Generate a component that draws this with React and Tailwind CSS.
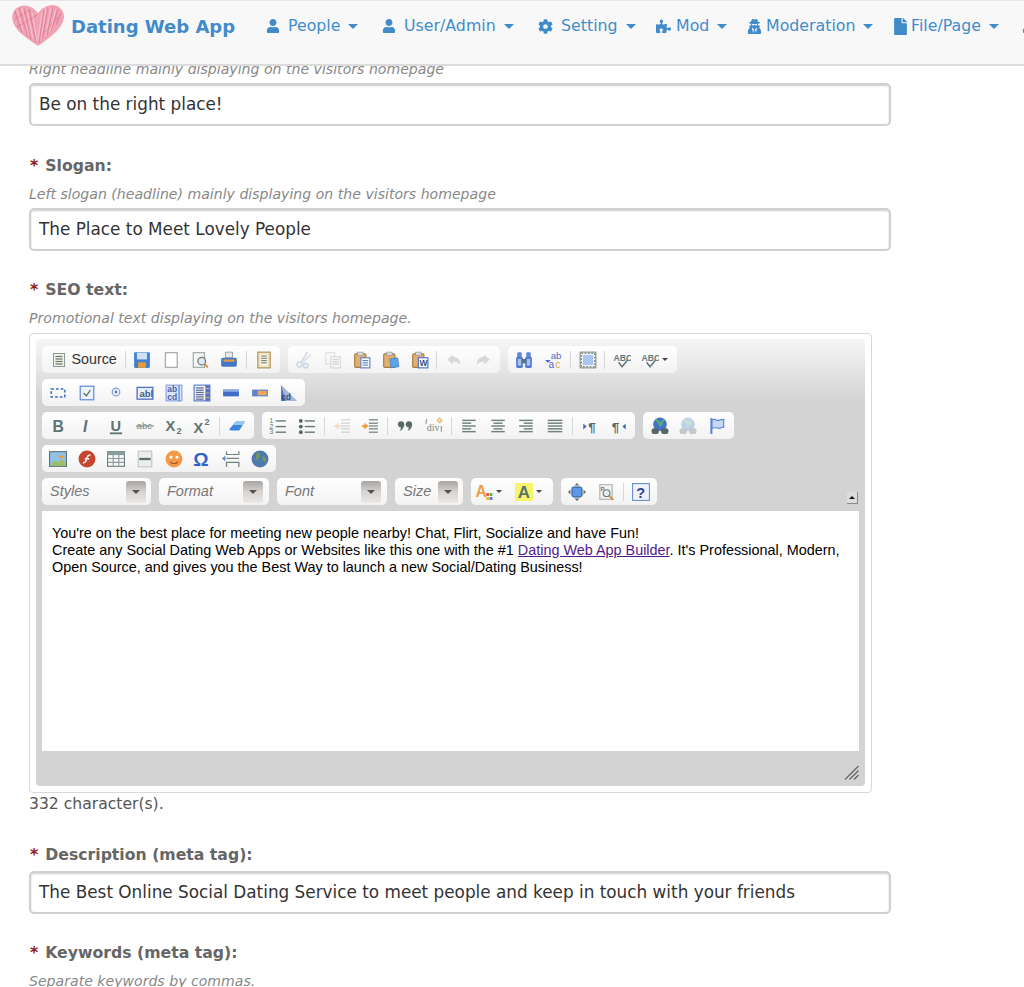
import React from "react";
import { FaUser, FaCog, FaPuzzlePiece, FaUserSecret, FaFile } from "react-icons/fa";

const S = ({ children, size = 18 }) => (
  <svg width={size} height={size} viewBox="0 0 16 16" className="block shrink-0">{children}</svg>
);
const lines = (x1, x2, ys, c = "#6f7f7c", w = 1.2) =>
  ys.map((y, i) => <line key={i} x1={Array.isArray(x1) ? x1[i] : x1} x2={Array.isArray(x2) ? x2[i] : x2} y1={y} y2={y} stroke={c} strokeWidth={w} />);
const T = ({ x, y, s, c = "#5f7471", fs = 12, w = 700, it, font = "Liberation Sans" }) => (
  <text x={x} y={y} fontFamily={font} fontSize={fs} fontWeight={w} fontStyle={it ? "italic" : "normal"} fill={c}>{s}</text>
);
const Clip = ({ inner }) => (
  <>
    <rect x="1.5" y="2.5" width="10" height="12" rx="1" fill="#e0b070" stroke="#a87a40" />
    <rect x="4" y="1" width="5" height="3" fill="#d8d8d8" stroke="#999" strokeWidth=".6" />
    {inner}
  </>
);

const icons = {
  source: <S size={16}><rect x="2.5" y="1.5" width="11" height="13" fill="#f4f2e6" stroke="#8a9a94" />{lines(4.5, 11.5, [4.5, 7, 9.5, 12], "#66766f")}</S>,
  save: <S><rect x="1" y="1" width="14" height="14" rx="1" fill="#3f7fd0" /><rect x="3.5" y="1.5" width="9" height="6" fill="#cfe0f5" /><rect x="4.5" y="10" width="7" height="5" fill="#e69a3c" /></S>,
  newpage: <S><rect x="3" y="1.5" width="10.5" height="13" fill="#fff" stroke="#9aa5a2" /></S>,
  preview: <S><rect x="2" y="1.5" width="10" height="13" fill="#f7f7f7" stroke="#9aa5a2" /><circle cx="9.5" cy="9" r="3.4" fill="#dfe9ee" stroke="#68777a" strokeWidth="1.1" /><line x1="12" y1="11.5" x2="15" y2="14.5" stroke="#d98a3a" strokeWidth="1.6" /></S>,
  print: <S><rect x="5" y="1" width="6" height="5" fill="#e9e9e9" stroke="#8a8f98" strokeWidth=".7" /><rect x="1" y="6" width="14" height="8" rx="1.5" fill="#3f78c8" /><rect x="3" y="7.5" width="10" height="2" fill="#e89a45" /></S>,
  templates: <S><rect x="2.5" y="1" width="11" height="14" fill="#f3e2b8" stroke="#a98e5c" /><rect x="5" y="3" width="6" height="10" fill="#fbf7ea" />{lines(5.5, 10.5, [4.5, 6.5, 8.5, 10.5], "#78827e", 1)}</S>,
  cut: <S><line x1="11" y1="1" x2="5" y2="11" stroke="#8a9ab0" strokeWidth="1.7" /><line x1="14" y1="3" x2="7" y2="10" stroke="#9aa8bc" strokeWidth="1.4" /><circle cx="4" cy="12" r="2.2" fill="none" stroke="#6f8fd0" strokeWidth="1.4" /><circle cx="9.5" cy="13" r="2" fill="none" stroke="#6f8fd0" strokeWidth="1.4" /></S>,
  copy: <S><rect x="1.5" y="1.5" width="8" height="10" fill="#f5f3e5" stroke="#9aa" /><rect x="6" y="5" width="8.5" height="10" fill="#fbf8ea" stroke="#8a9a94" />{lines(7.5, 13, [7.5, 9.5, 11.5], "#889")}</S>,
  paste: <S><Clip inner={<><rect x="7" y="6" width="8" height="9" fill="#fff" stroke="#5c80c8" />{lines(8.5, 13.5, [8.5, 10.5, 12.5], "#5c80c8", 1)}</>} /></S>,
  pastetext: <S><Clip inner={<path d="M7 7l7-1 1 8-7 1z" fill="#5aa5e5" stroke="#3a78c0" strokeWidth=".6" />} /></S>,
  pasteword: <S><Clip inner={<><rect x="6.5" y="6" width="8.5" height="9" fill="#fff" stroke="#4a70c8" /><T x={7.6} y={13.5} s="W" c="#33507f" fs={7.5} /></>} /></S>,
  undo: <S><path d="M7 3L2 7.5 7 12V9.3c3 0 4.8.6 6.5 3 0-4.5-2.5-7-6.5-7.2z" fill="#7d9490" /></S>,
  redo: <S><path d="M9 3l5 4.5L9 12V9.3c-3 0-4.8.6-6.5 3 0-4.5 2.5-7 6.500-7.2z" fill="#7d9490" /></S>,
  find: <S><rect x="2" y="1" width="4" height="5" rx="1" fill="#5f88d8" /><rect x="10" y="1" width="4" height="5" rx="1" fill="#5f88d8" /><rect x="1" y="5" width="6" height="10" rx="1.5" fill="#4f78d0" /><rect x="9" y="5" width="6" height="10" rx="1.5" fill="#4f78d0" /><rect x="2.500" y="7" width="3" height="6" fill="#a8c2ee" /><rect x="10.500" y="7" width="3" height="6" fill="#a8c2ee" /><rect x="6" y="7" width="4" height="4" fill="#5b7280" /></S>,
  replace: <S><T x={6} y={7} s="ab" c="#4a68cc" fs={8.5} w={400} /><T x={4} y={15} s="a" c="#4a68cc" fs={9} w={400} /><T x={10} y={15} s="c" c="#e8a04a" fs={9} w={400} /><path d="M1 8l2.5 2.5L6 8z" fill="#4a68cc" /></S>,
  selectall: <S><rect x="1" y="1" width="14" height="14" fill="#f4f4f0" stroke="#83918e" /><rect x="3.5" y="3.5" width="9" height="9" fill="#a8c6f0" /><rect x="2" y="2" width="12" height="12" fill="none" stroke="#5d6c6b" strokeDasharray="1.5 1.5" /></S>,
  spell: <S><T x={0.5} y={8.5} s="ABC" c="#64787a" fs={7.6} /><path d="M5 10l3 4 5-6" fill="none" stroke="#64787a" strokeWidth="1.4" /></S>,
  dashed: <S><rect x="2" y="4.5" width="12" height="7" fill="none" stroke="#3f6cc0" strokeWidth="1.4" strokeDasharray="2.4 1.8" /></S>,
  check: <S><rect x="2" y="2" width="12" height="12" fill="#eef3fb" stroke="#6f93d6" strokeWidth="1.2" /><path d="M5 8l2.4 2.5L11 5.5" fill="none" stroke="#5f7c78" strokeWidth="1.3" /></S>,
  radio: <S size={16}><circle cx="8" cy="7" r="3.8" fill="#f2f5fb" stroke="#7f9ad6" strokeWidth="1.2" /><circle cx="8" cy="7" r="1.4" fill="#5c78b8" /></S>,
  textfield: <S><rect x="1" y="3" width="14" height="10.5" fill="#e8eefb" stroke="#5475c5" strokeWidth="1.2" /><T x={3} y={11.5} s="abl" c="#3f5d92" fs={8.5} /></S>,
  textarea: <S><rect x="1" y="1" width="14" height="14" fill="#dce6fa" stroke="#86a3df" /><T x={2} y={7.4} s="ab" c="#4464a8" fs={7.5} /><T x={2} y={14} s="cd" c="#4464a8" fs={7.5} /><line x1="12.5" y1="1" x2="12.5" y2="15" stroke="#5475c5" /></S>,
  select: <S><rect x="1" y="1" width="14" height="14" fill="#f3f6fc" stroke="#5475c5" />{lines(2.5, 9.5, [3.5, 5.5, 7.5, 9.5, 11.5, 13.5], "#5b6c94", 1.1)}<rect x="11" y="1" width="4" height="14" fill="#5475c5" /><path d="M11.5 4h3M11.5 8h3M11.5 12h3" stroke="#e6b060" /></S>,
  btn: <S><rect x="1" y="5" width="14" height="6" fill="#3e6cc8" /><rect x="1" y="5" width="14" height="2" fill="#8aa8e2" /></S>,
  imgbtn: <S><rect x="1" y="5" width="14" height="6" fill="#5b82cf" /><rect x="6" y="6" width="8" height="4" fill="#eba75a" /></S>,
  hidden: <S><path d="M1 1l14 14H1z" fill="#496fc0" /><path d="M1 1l14 14H5z" fill="#cfd5df" opacity=".7" /><T x={1} y={14} s="cd" c="#38527f" fs={7.5} /></S>,
  bold: <S><T x={3} y={13} s="B" fs={14} /></S>,
  italic: <S><T x={4.5} y={13} s="I" fs={14} it /></S>,
  underline: <S><T x={3.2} y={12} s="U" fs={13} /><line x1="2.5" y1="14.5" x2="13.5" y2="14.5" stroke="#5f7471" strokeWidth="1.6" /></S>,
  strike: <S><T x={0.5} y={11} s="abc" c="#7b8c8a" fs={8.6} w={400} /><line x1="0" y1="8" x2="16" y2="8" stroke="#7b8c8a" /></S>,
  sub: <S><T x={0.5} y={12.5} s="X" fs={13} /><T x={10.3} y={15.5} s="2" c="#5f7471" fs={8} /></S>,
  sup: <S><T x={0.5} y={14} s="X" fs={13} /><T x={10.3} y={7.5} s="2" c="#5f7471" fs={8} /></S>,
  eraser: <S><path d="M1 11L7 4h8l-5 8H2.500z" fill="#3f84dc" /><path d="M7 4h8l-2 3H4.500z" fill="#9cc4f0" /></S>,
  numlist: <S><T x={0.5} y={5.5} s="1" c="#5f7471" fs={6} w={400} /><T x={0.5} y={10.5} s="2" c="#5f7471" fs={6} w={400} /><T x={0.5} y={15.5} s="3" c="#5f7471" fs={6} w={400} />{lines(6, 15, [3.5, 8.5, 13.5], "#5f7471")}</S>,
  bullist: <S><circle cx="2.500" cy="3.500" r="1.7" fill="#4f6360" /><circle cx="2.500" cy="8.500" r="1.7" fill="#4f6360" /><circle cx="2.500" cy="13.500" r="1.7" fill="#4f6360" />{lines(6, 15, [3.5, 8.5, 13.5], "#5f7471")}</S>,
  outdent: <S>{lines(7, 15, [2.5, 5.5, 8, 10.5, 13.5], "#71817e", 1.1)}<path d="M1 8l3.500-3v2h2v2h-2v2z" fill="#ec9a40" /></S>,
  indent: <S>{lines(7, 15, [2.5, 5.5, 8, 10.5, 13.5], "#71817e", 1.1)}<path d="M6.500 8L3 5v2H1v2h2v2z" fill="#ec9a40" /></S>,
  quote: <S><circle cx="4.500" cy="6.500" r="2.800" fill="#566a68" /><path d="M7.200 6.500c0 3-1.500 5-4 6 1-1.500 1.500-3 1.300-4z" fill="#566a68" /><circle cx="11.500" cy="6.500" r="2.800" fill="#566a68" /><path d="M14.200 6.500c0 3-1.500 5-4 6 1-1.500 1.500-3 1.300-4z" fill="#566a68" /></S>,
  div: <S><T x={1.500} y={12.500} s="div" c="#7a8d8a" fs={9} w={400} font="Liberation Serif" /><path d="M13 1l2 2-2 2-2-2z" fill="none" stroke="#e8a85c" /><path d="M2 2c-1 0-1 2-1 3s-.5 1-.5 1M14.500 8v5" stroke="#8a9a98" fill="none" /></S>,
  left: <S>{lines(2, [14, 10, 14, 10, 14], [3, 5.500, 8, 10.500, 13], "#71817e", 1.3)}</S>,
  center: <S>{lines([2, 4, 2, 4, 2], [14, 12, 14, 12, 14], [3, 5.500, 8, 10.500, 13], "#71817e", 1.3)}</S>,
  right: <S>{lines([2, 6, 2, 6, 2], 14, [3, 5.500, 8, 10.500, 13], "#71817e", 1.3)}</S>,
  justify: <S>{lines(1.500, 14.500, [3, 5.500, 8, 10.500, 13], "#71817e", 1.3)}</S>,
  ltr: <S><path d="M2 6l3 2.500L2 11z" fill="#3f68c0" /><T x={6.500} y={13} s="¶" c="#566a68" fs={12} /></S>,
  rtl: <S><T x={1.500} y={13} s="¶" c="#566a68" fs={12} /><path d="M14 6l-3 2.500L14 11z" fill="#3f68c0" /></S>,
  link: <S><circle cx="8" cy="6.500" r="6" fill="#3f72c8" /><path d="M4 2.500c3 1 4 3 4 6M12 2.500c-2 1-3 2-3 5" stroke="#57b06a" strokeWidth="1.800" fill="none" /><rect x="0.500" y="10" width="6.500" height="5" rx="2" fill="#546764" /><rect x="9" y="10" width="6.500" height="5" rx="2" fill="#546764" /></S>,
  flag: <S><path d="M3 1v14" stroke="#5a82d8" strokeWidth="1.800" /><path d="M3.500 2.500c3-1.500 4 1 6 .5s3-1 4.500-1v7c-2 0-3 1.500-5 1s-3-1-5.500 0z" fill="#c5d7f2" stroke="#5a82d8" /></S>,
  image: <S><rect x="0.500" y="1.500" width="15" height="13" fill="#8fc3ea" stroke="#5a7571" /><path d="M1 14l4-5 3 2 3-3 4 4v2z" fill="#9bbf62" /><path d="M8 7l3-3 3 3z" fill="#ec9a40" /></S>,
  flash: <S><circle cx="8" cy="8" r="7.500" fill="#c5452f" /><path d="M11 4.500C8 4.500 8 7 7.300 9c-.5 1.500-1.300 2.500-3 2.500M6 7.800h4" stroke="#fff" strokeWidth="1.300" fill="none" /></S>,
  table: <S><rect x="0.500" y="1.500" width="15" height="13" fill="#f5f7f7" stroke="#6f7f7d" /><rect x="0.500" y="1.500" width="15" height="3" fill="#8a9fa0" /><path d="M5.500 2v12M10.500 2v12M1 7.500h14M1 11h14" stroke="#8b9d9b" /></S>,
  hr: <S><rect x="2" y="1" width="12" height="14" fill="#ececec" stroke="#c0c7c5" /><rect x="3" y="7" width="10" height="2" fill="#5b6e6c" /></S>,
  smiley: <S><circle cx="8" cy="8" r="7.500" fill="#f39a4a" /><circle cx="5.300" cy="6.500" r="1.300" fill="#fff" /><circle cx="10.700" cy="6.500" r="1.300" fill="#fff" /><path d="M4.500 10.500c2 2 5 2 7 0" stroke="#a04a1c" fill="none" /></S>,
  omega: <S><T x={0.2} y={14} s="Ω" c="#2f63cc" fs={17} /></S>,
  pagebreak: <S><path d="M4 1v3h11V1M4 15v-4h11v4M4 7.500h11" stroke="#72827f" fill="none" strokeWidth="1.100" /><path d="M0 7.500l3-2.500v5z" fill="#4a82d0" /></S>,
  iframe: <S><circle cx="8" cy="8" r="7.500" fill="#4d78b0" /><path d="M5 2c3 1 4 2 3 4S5 8 4 10M11 5c2 1 3 3 2 6-1.500 0-3-2-3-3.500" fill="#73965e" /></S>,
  textcolor: <S><T x={0.5} y={12.500} s="A" c="#eba04a" fs={14} /><rect x="10" y="9" width="2.500" height="2.500" fill="#e0503a" /><rect x="13" y="9" width="2.500" height="2.500" fill="#55b050" /><rect x="10" y="12.500" width="2.500" height="2.500" fill="#e8b030" /><rect x="13" y="12.500" width="2.500" height="2.500" fill="#4878d8" /></S>,
  bgcolor: <S><rect x="0" y="0" width="16" height="16" fill="#f6f56a" /><T x={2.500} y={13.500} s="A" c="#5c706e" fs={15} /></S>,
  maximize: <S><path d="M8 0l2 2H6zM8 16l2-2H6zM0 8l2-2v4zM16 8l-2-2v4z" fill="#5e706e" /><circle cx="8" cy="8" r="6" fill="#8fa2a8" /><rect x="4" y="4" width="8" height="8" fill="#5b9ae8" stroke="#2f62b8" strokeWidth=".6" /></S>,
  blocks: <S><rect x="2.500" y="1.500" width="11" height="13" fill="#f2f2f2" stroke="#aab2b0" /><T x={3} y={7} s="P" c="#6c7c7a" fs={5.500} /><circle cx="8.500" cy="9" r="3" fill="#e4ecef" stroke="#68777a" /><line x1="11" y1="11.500" x2="14.500" y2="15" stroke="#d98a3a" strokeWidth="1.500" /></S>,
  help: <S><rect x="0.500" y="0.500" width="15" height="15" fill="#eef2fa" stroke="#6f8fd0" /><T x={3.800} y={13} s="?" c="#303e9a" fs={13} /></S>,
};

const Btn = ({ n, off, w = "w-[28.8px]" }) => (
  <span className={`flex h-full items-center justify-center ${w} ${off ? "opacity-30" : ""}`}>{icons[n]}</span>
);
const Sep = () => (
  <span className="flex h-full w-[6px] items-center justify-center"><span className="h-[18px] w-px bg-[#d5d8d8]" /></span>
);
const Arrow = () => (
  <span className="ml-[3px] h-0 w-0 border-x-[3px] border-t-[3px] border-x-transparent border-t-[#444]" />
);
const Group = ({ children, cls = "" }) => (
  <div className={`flex h-full items-center rounded-[5px] bg-[linear-gradient(#ffffff,#f2f2f2)] px-[2px] ${cls}`}>{children}</div>
);
const Row = ({ children, cls = "" }) => <div className={`mb-[6px] flex h-[27px] gap-[8px] ${cls}`}>{children}</div>;
const Combo = ({ label, w, arrowAt }) => (
  <div className={`flex h-full items-start rounded-[5px] bg-[linear-gradient(#ffffff,#f2f2f2)] ${w}`}>
    <span className={`h-[24px] pl-[8px] text-[14.5px] leading-[27px] text-[#777] italic [font-family:'Liberation_Sans',sans-serif] ${arrowAt}`}>{label}</span>
    <span className="mt-[3px] flex h-[22px] w-[20px] items-center justify-center rounded-[3px] bg-[linear-gradient(#a8a4a2,#d8d4d2_50%,#ebe7e5)]">
      <span className="h-0 w-0 border-x-[4px] border-t-[4px] border-x-transparent border-t-[#555]" />
    </span>
  </div>
);

const Heart = () => (
  <svg width="52" height="41" viewBox="0 0 52 41" className="block shrink-0">
    <path d="M26 41C18 35 3 27 .5 15-1 6 5 1 12 .5c6 0 11 3 14 8 3-5 9-8.500 15-8.500 7 .5 11 6 11 12-1 12-15 21-26 29z" fill="#f0a3b4" />
    <g stroke="#e0708a" strokeWidth="1.100" fill="none" opacity=".7">
      <path d="M3 6l7 22M7 3l9 29M12 3l7 32M17 4l7 33M32 5l-5 33M36 3l-6 31M41 2l-6 28M46 4l-7 22M49 8l-5 12M3 14l15 -9M5 22l20-12M30 30l16-18" />
    </g>
    <g stroke="#fbe3e8" strokeWidth=".8" fill="none" opacity=".65">
      <path d="M5 5l6 21M10 3l7 28M15 5l6 29M20 7l5 30M30 8l-4 27M34 4l-5 30M39 3l-5 26M44 4l-6 23" />
    </g>
  </svg>
);

const Caret = () => <span className="block h-0 w-0 border-x-[5px] border-t-[5px] border-x-transparent border-t-[#428bca]" />;
const NavItem = ({ icon, label, w, slot }) => (
  <div className={`flex shrink-0 items-center ${w}`}>
    <span className={`flex shrink-0 items-center ${slot}`}>{icon}</span>
    <span className="text-[15.8px] leading-[24px] text-[#428bca]">{label}</span>
    <span className="ml-[8px] flex items-center"><Caret /></span>
  </div>
);

const Label = ({ children, cls = "" }) => (
  <div className={`text-[15.7px] leading-[24px] font-bold text-[#666] ${cls}`}>
    <span className="mr-[7px] ml-[1px] text-[#8b1a1a]">*</span>
    {children}
  </div>
);
const Hint = ({ children, cls = "" }) => (
  <div className={`text-[14.1px] leading-[20px] text-[#888] italic ${cls}`}>{children}</div>
);
const Input = ({ value }) => (
  <div className="flex h-[43px] w-[862px] items-center rounded-[5px] border-2 border-[#d0d0d0] bg-white pl-[8px] text-[16.85px] text-[#333] shadow-[inset_0_1px_2px_rgba(0,0,0,0.2)]">
    {value}
  </div>
);

export default function App() {
  return (
    <div className="flex h-[987px] w-[1024px] flex-col overflow-hidden bg-white [font-family:'DejaVu_Sans',sans-serif]">
      <nav className="relative z-10 flex h-[66px] shrink-0 items-start overflow-hidden border-t border-b-2 border-t-[#e7e7e7] border-b-[#dcdcdc] bg-[#f8f8f8] pt-[4px]">
        <div className="ml-[12px] w-[59px] shrink-0"><Heart /></div>
        <div className="mt-[9px] w-[195px] shrink-0 text-[18px] leading-[26px] font-bold text-[#428bca]">Dating Web App</div>
        <div className="mt-[9px] flex shrink-0">
          <NavItem icon={<FaUser size={14} color="#428bca" />} label="People" w="w-[116px]" slot="w-[22px]" />
          <NavItem icon={<FaUser size={14} color="#428bca" />} label="User/Admin" w="w-[156px]" slot="w-[22px]" />
          <NavItem icon={<FaCog size={15} color="#428bca" />} label="Setting" w="w-[118px]" slot="w-[23px]" />
          <NavItem icon={<FaPuzzlePiece size={15} color="#428bca" />} label="Mod" w="w-[91px]" slot="w-[20px]" />
          <NavItem icon={<FaUserSecret size={15} color="#428bca" />} label="Moderation" w="w-[145px]" slot="w-[19px]" />
          <NavItem icon={<FaFile size={17} color="#428bca" />} label="File/Page" w="w-[130px]" slot="w-[19px]" />
          <FaUser size={14} color="#428bca" className="mt-[5px] shrink-0" />
        </div>
      </nav>

      <main className="-mt-[7px] pl-[29px]">
        <Hint>Right headline mainly displaying on the visitors homepage</Hint>
        <div className="mt-[4px]"><Input value="Be on the right place!" /></div>

        <Label cls="mt-[28px]">Slogan:</Label>
        <Hint cls="mt-[6px]">Left slogan (headline) mainly displaying on the visitors homepage</Hint>
        <div className="mt-[4px]"><Input value="The Place to Meet Lovely People" /></div>

        <Label cls="mt-[27px]">SEO text:</Label>
        <Hint cls="mt-[6px]">Promotional text displaying on the visitors homepage.</Hint>

        <div className="mt-[5px] h-[460px] w-[843px] rounded-[4px] border border-[#d8d8d8] bg-white p-[6px] pt-[5px]">
          <div className="h-[447px] rounded-[4px] bg-[linear-gradient(#f6f6f6,#d3d3d3_62px,#d3d3d3)] px-[6px] pt-[7px]">
            <Row>
              <Group>
                <span className="flex h-full w-[78px] items-center pl-[6.5px]">
                  {icons.source}
                  <span className="ml-[5px] text-[14.3px] text-[#333] [font-family:'Liberation_Sans',sans-serif]">Source</span>
                </span>
                <Sep />
                <Btn n="save" /><Btn n="newpage" /><Btn n="preview" /><Btn n="print" /><Sep /><Btn n="templates" />
              </Group>
              <Group>
                <Btn n="cut" off /><Btn n="copy" off /><Btn n="paste" /><Btn n="pastetext" /><Btn n="pasteword" /><Sep /><Btn n="undo" off /><Btn n="redo" off />
              </Group>
              <Group>
                <Btn n="find" /><Btn n="replace" /><Sep /><Btn n="selectall" /><Sep /><Btn n="spell" />
                <span className="flex h-full w-[38px] items-center pl-[4px]">{icons.spell}<Arrow /></span>
              </Group>
            </Row>
            <Row>
              <Group>
                <Btn n="dashed" /><Btn n="check" /><Btn n="radio" /><Btn n="textfield" /><Btn n="textarea" /><Btn n="select" /><Btn n="btn" /><Btn n="imgbtn" /><Btn n="hidden" />
              </Group>
            </Row>
            <Row>
              <Group>
                <Btn n="bold" /><Btn n="italic" /><Btn n="underline" /><Btn n="strike" /><Btn n="sub" /><Btn n="sup" /><Sep /><Btn n="eraser" />
              </Group>
              <Group>
                <Btn n="numlist" /><Btn n="bullist" /><Sep /><Btn n="outdent" off /><Btn n="indent" /><Sep /><Btn n="quote" /><Btn n="div" /><Sep /><Btn n="left" /><Btn n="center" /><Btn n="right" /><Btn n="justify" /><Sep /><Btn n="ltr" /><Btn n="rtl" />
              </Group>
              <Group>
                <Btn n="link" /><Btn n="link" off /><Btn n="flag" />
              </Group>
            </Row>
            <Row>
              <Group>
                <Btn n="image" /><Btn n="flash" /><Btn n="table" /><Btn n="hr" /><Btn n="smiley" /><Btn n="omega" /><Btn n="pagebreak" /><Btn n="iframe" />
              </Group>
            </Row>
            <Row cls="items-stretch">
              <Combo label="Styles" w="h-[24px] w-[109px]" arrowAt="w-[84px]" />
              <Combo label="Format" w="h-[24px] w-[110px]" arrowAt="w-[84px]" />
              <Combo label="Font" w="h-[24px] w-[110px]" arrowAt="w-[84px]" />
              <Combo label="Size" w="h-[24px] w-[68px]" arrowAt="w-[43px]" />
              <Group cls="w-[82px]">
                <span className="flex h-full w-[39px] items-center pl-[2px]">{icons.textcolor}<Arrow /></span>
                <span className="flex h-full w-[36px] items-center pl-[3px]">{icons.bgcolor}<Arrow /></span>
              </Group>
              <Group>
                <Btn n="maximize" /><Btn n="blocks" /><Sep /><Btn n="help" />
              </Group>
              <div className="mt-[14px] mr-[1px] ml-auto flex h-[12px] w-[11px] items-center justify-center border-r border-b border-[#888] bg-[#dcdcdc]">
                <span className="h-0 w-0 border-x-[3px] border-b-[3px] border-x-transparent border-b-[#111]" />
              </div>
            </Row>
            <div className="h-[240px] bg-white px-[10px] pt-[14px] text-[14.4px] leading-[17px] text-black [font-family:'Liberation_Sans',sans-serif]">
              You're on the best place for meeting new people nearby! Chat, Flirt, Socialize and have Fun!
              <br />
              Create any Social Dating Web Apps or Websites like this one with the #1{" "}
              <span className="text-[#551a8b] underline">Dating Web App Builder</span>. It's Professional, Modern, Open Source, and gives you the Best Way to launch a new Social/Dating Business!
            </div>
            <div className="flex justify-end pt-[14px]">
              <svg width="15" height="15" viewBox="0 0 15 15" className="block">
                <path d="M14.500 1L1 14.500M14.500 5.500L5.500 14.500M14.500 10L10 14.500" stroke="#666" strokeWidth="1.300" />
              </svg>
            </div>
          </div>
        </div>

        <div className="mt-[1px] text-[15.6px] leading-[20px] text-[#555]">332 character(s).</div>

        <Label cls="mt-[29px]">Description (meta tag):</Label>
        <div className="mt-[4px]"><Input value="The Best Online Social Dating Service to meet people and keep in touch with your friends" /></div>

        <Label cls="mt-[27px]">Keywords (meta tag):</Label>
        <Hint cls="mt-[6px]">Separate keywords by commas.</Hint>
      </main>
    </div>
  );
}
